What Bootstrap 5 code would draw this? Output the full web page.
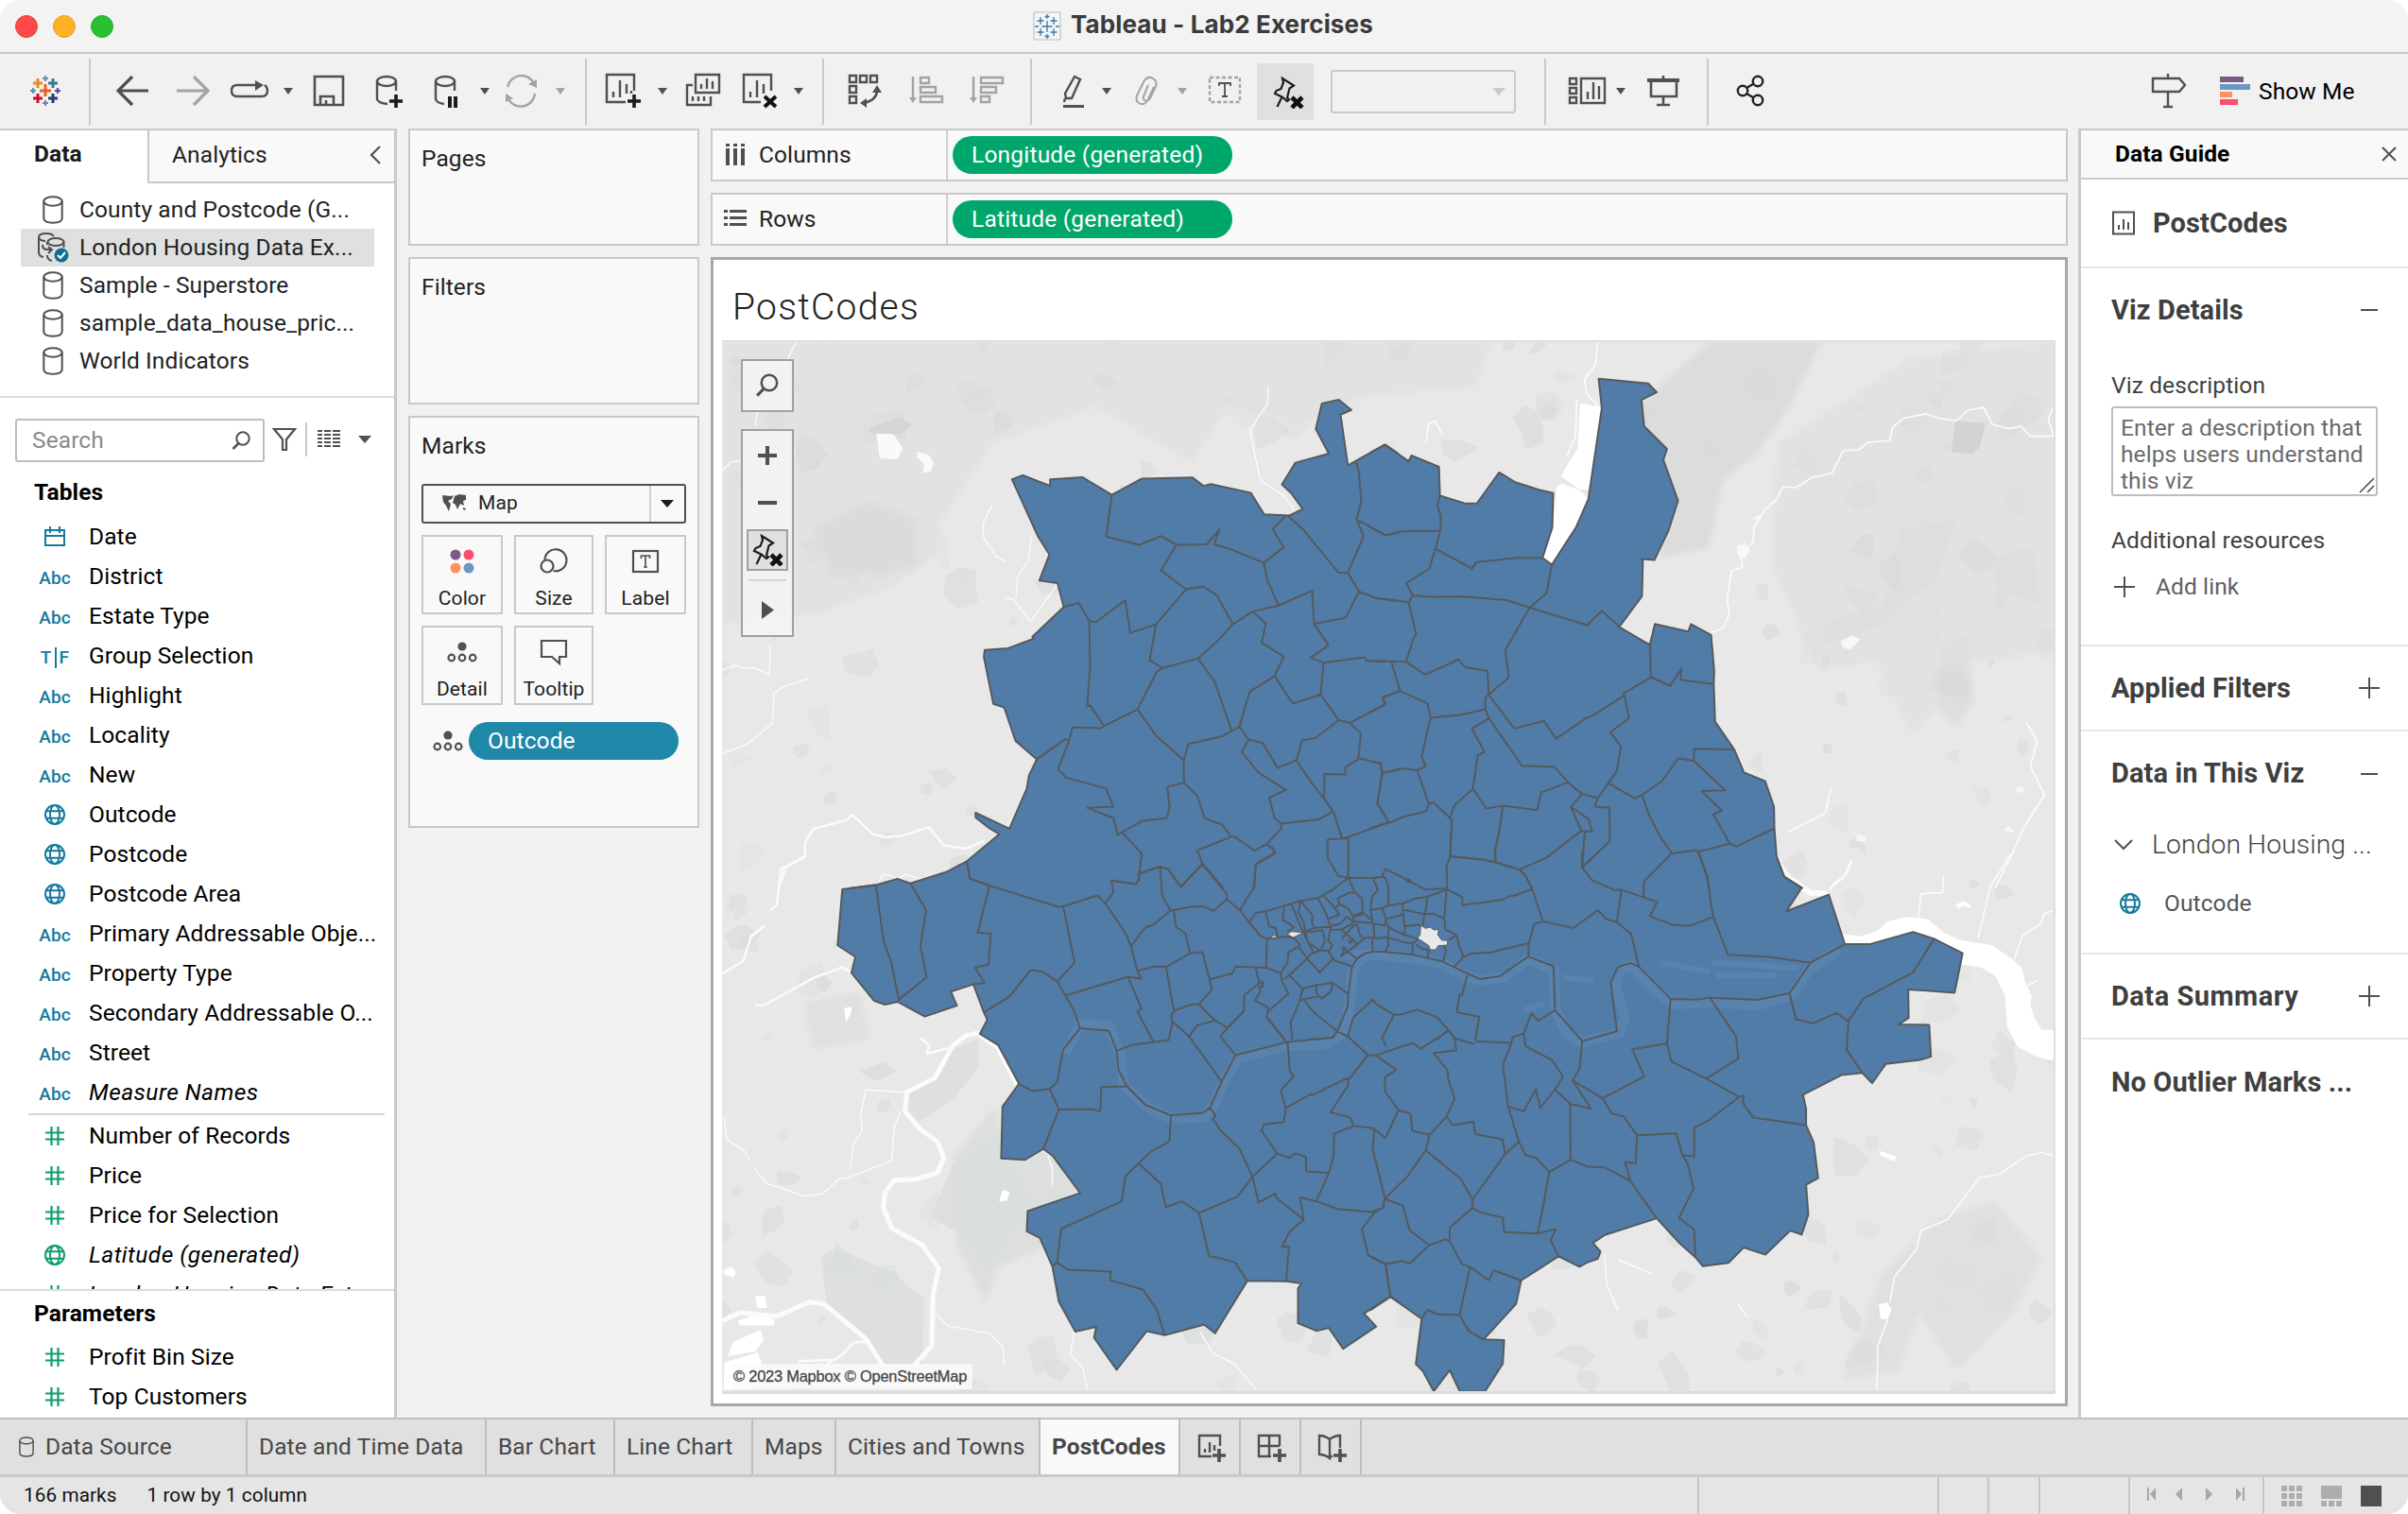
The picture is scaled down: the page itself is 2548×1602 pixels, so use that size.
<!DOCTYPE html>
<html lang="en">
<head>
<meta charset="utf-8">
<title>Tableau - Lab2 Exercises</title>
<link rel="stylesheet" href="https://cdn.jsdelivr.net/npm/bootstrap@5.3.0/dist/css/bootstrap.min.css">
<style>
html,body{height:100%}
body{font-family:Roboto,"Liberation Sans",sans-serif;font-size:24.5px;line-height:1.2;color:#222;background:#fff;overflow:hidden;letter-spacing:.1px}
svg{display:block;flex-shrink:0}
.win{width:2548px;height:1602px;background:#f1f1f1;border-radius:22px;overflow:hidden}
.titlebar{height:57px;background:#f3f3f3;border-bottom:2px solid #c8c8c8;font-family:Inter,sans-serif;font-weight:700;font-size:26px;color:#3a3a3a;letter-spacing:.12px}
.title-side{width:1093px}
.tools{height:79px}
.vsep{width:2px;height:70px;background:#c9c9c9;flex-shrink:0}
.ic{fill:none;stroke:#505050;stroke-width:2.4}
.dim{stroke:#a3a3a3}
.fd{fill:#505050;stroke:none}.fl{fill:#a3a3a3;stroke:none}.fk{fill:#1c1c1c;stroke:none}
.pinned{background:#e0e0e0}
.combo{width:196px;height:46px;border:2px solid #c9c9c9;border-radius:3px;margin-left:18px;margin-right:22px}
.main-area{height:1364px}
.side{width:420px;background:#fff;border-right:3px solid #c9c9c9;border-top:2px solid #c9c9c9}
.tab-data{width:156px;height:56px;font-weight:700;padding-left:36px;padding-top:10px;color:#1a1a1a}
.tab-an{height:56px;background:#f9f9f9;border-left:2px solid #c9c9c9;border-bottom:2px solid #c9c9c9;padding:0 13px 2px 24px}
.src{height:40px;margin:0 21px 0 22px;padding-left:17px;gap:10px}
.src.on{background:#e0e0e0}
.searchbox{width:264px;height:46px;border:2px solid #bdbdbd;border-radius:3px;color:#8a8a8a;padding:0 12px 0 16px}
.hd{font-weight:700;color:#000;padding-left:36px}
.fld{height:42px;color:#000;padding-left:36px;gap:14px;white-space:nowrap}
.fi{width:44px;height:24px;display:flex;align-items:center;justify-content:center;color:#147a9e;font-size:19px;font-weight:500}
.fi.txt{padding-top:4px}
.ital{font-style:italic;letter-spacing:.45px}
.cards{width:308px;gap:12px}
.pane{background:#f9f9f9;border:2px solid #c9c9c9;padding:15px 12px}
.mk{height:84px;border:2px solid #c9c9c9;font-size:21px;padding-top:1px}
.mk svg{margin:7px auto 7px}
.mksel{height:42px;border:2px solid #505050;border-radius:3px;font-size:21px}
.pill{height:40px;border-radius:20px;color:#fff;padding-left:20px}
.green{background:#00a76b;width:296px;letter-spacing:.2px}
.shelf{height:56px;background:#f9f9f9;border:2px solid #c9c9c9}
.shelf-name{width:249px;border-right:2px solid #d0d0d0;padding-left:12px;gap:13px}
.viz{border:3px solid #a8a8a8;background:#fff;width:1436px;height:1216px;padding:0 10px 0 9px}
.viz-title{height:85px;font-weight:300;font-size:39px;letter-spacing:1.25px;color:#222;padding:15px 0 0 11px}
.guide{width:349px;margin-left:11px;background:#fff;border-left:3px solid #c9c9c9;border-top:2px solid #c9c9c9;color:#3f3f3f}
.g-hd{height:52px;background:#f9f9f9;border-bottom:2px solid #c9c9c9;color:#000;font-weight:700;padding:0 12px 1px 36px}
.g-sec{border-bottom:2px solid #e6e6e6;padding-left:32px;padding-right:29px}
.g-t{font-weight:700;font-size:29px;white-space:nowrap}
.g-area{width:282px;height:95px;border:2px solid #bdbdbd;border-radius:3px;line-height:28px;color:#6b6b6b;padding:7px 8px}
.sheets{height:60px;background:#e0e0e0;border-top:2px solid #c0c0c0;color:#464646;white-space:nowrap}
.sh{height:58px;border-right:2px solid #bdbdbd;padding-left:12px}
.sh.cur{background:#f9f9f9;font-weight:700}
.status{height:42px;background:#e5e5e5;border-top:3px solid #c9c9c9;color:#111;font-size:20.7px}
.st{height:39px;border-right:2px solid #c6c6c6}
.w1{width:262px;padding-left:18px}.w2{width:253px}.w3{width:136px}.w4{width:146px}.w5{width:88px}.w6{width:216px}.w7{width:148px}.w8{width:64px}
.blk{fill:#517ca8;stroke:none}
.ln{fill:none;stroke:#555a5e;stroke-width:2;stroke-linejoin:round;vector-effect:non-scaling-stroke}
.riv{fill:none;stroke:#fbfbfb;vector-effect:non-scaling-stroke;stroke-linejoin:round}
.th{fill:none;stroke:#5983af;stroke-width:11;vector-effect:non-scaling-stroke;stroke-linejoin:round}
.attr{left:11px;bottom:5px;height:27px;width:254px;background:rgba(250,250,250,.85);font-family:"Liberation Sans",sans-serif;font-size:16.4px;letter-spacing:-.2px;color:#444;padding:4px 0 0 1px;white-space:nowrap;-webkit-text-stroke:.3px #4c4c4c}
.mctl{background:rgba(244,244,244,.9);border:2px solid #a0a0a0;width:56px}
</style>
</head>
<body>
<svg width="0" height="0" class="position-absolute">
<symbol id="cyl" viewBox="0 0 22 30"><path d="M1.3 6v18c0 3 4 4.7 9.7 4.7S20.700 27 20.700 24V6" fill="none" stroke="#505050" stroke-width="2"/><ellipse cx="11" cy="6" rx="9.700" ry="4.700" fill="none" stroke="#505050" stroke-width="2"/></symbol>
<symbol id="globe" viewBox="0 0 24 24"><g fill="none" stroke="currentColor" stroke-width="2"><circle cx="12" cy="12" r="10"/><ellipse cx="12" cy="12" rx="5" ry="10"/><path d="M2.500 8.300h19M2.500 15.700h19"/></g></symbol>
<symbol id="hash" viewBox="0 0 24 24"><path d="M8.500 2v20M15.500 2v20M2 8.500h20M2 15.500h20" stroke="#0d9d6b" stroke-width="2.200"/></symbol>
<symbol id="det" viewBox="0 0 32 22"><circle cx="16" cy="5" r="4.600" fill="#505050"/><g fill="none" stroke="#505050" stroke-width="2.200"><circle cx="4.800" cy="17" r="3.300"/><circle cx="16" cy="17" r="3.300"/><circle cx="27.200" cy="17" r="3.300"/></g></symbol>
<symbol id="pin" viewBox="0 0 34 34"><path d="M11 2L23 9.500L18.500 12.500L16 22.500L18 24.500L16 26L10.500 21.500L3 18L4.500 15L9.500 13L12 6.500ZM10.500 21.500L5.500 32" fill="none" stroke="#1c1c1c" stroke-width="2.200"/><path d="M21 22l11 11M32 22l-11 11" stroke="#111" stroke-width="4.600"/></symbol>
<symbol id="mag" viewBox="0 0 22 22"><circle cx="13" cy="9" r="6.700" fill="none" stroke="#505050" stroke-width="2"/><path d="M8.500 14L2.500 20" stroke="#505050" stroke-width="2.500"/></symbol>
<symbol id="pls" viewBox="0 0 24 24"><path d="M12 1v22M1 12h22" stroke="#505050" stroke-width="2"/></symbol>
</svg>
<div class="win d-flex flex-column">
<header class="titlebar d-flex align-items-center">
 <div class="title-side"><svg width="140" height="56" viewBox="0 0 140 56"><circle cx="28" cy="28" r="11.500" fill="#ff4947" stroke="#e0433f"/><circle cx="68" cy="28" r="11.500" fill="#ffb125" stroke="#e0a12c"/><circle cx="108" cy="28" r="11.500" fill="#28c132" stroke="#24ad2c"/></svg></div>
 <svg width="32" height="32" viewBox="0 0 32 32"><path d="M1 1h28v29H1z" fill="#f4f5f6" stroke="#bbb"/><path d="M15 10v12M9.500 16h11M8 6v8M4.500 10h7M22 6v8M18.500 10h7M8 18v8M4.500 22h7M22 18v8M18.500 22h7M15 3v5M12.500 5.500h5M15 24v5M12.500 26.500h5M2 16h4M24 16h4" stroke="#3777a8" stroke-width="1.300"/></svg>
 <span class="ps-2 pb-1">Tableau - Lab2 Exercises</span>
</header>
<div class="tools d-flex align-items-center">
 <svg width="94" height="78" viewBox="0 58 94 78" fill="none"><g stroke-width="3"><path d="M48 89v13M42 96h12" stroke="#eb5e1f"/><path d="M40 83v10M35 88h10" stroke="#ee8a1d"/><path d="M56 83v10M51 88h10" stroke="#3e7a8f"/><path d="M40 99v10M35 104h10" stroke="#c8102e"/><path d="M56 99v10M51 104h10" stroke="#1f3f77"/></g><g stroke-width="2.200"><path d="M48 80v6M45 83h6M35 93v6M32 96h6" stroke="#6394a6"/><path d="M61 93v6M58 96h6" stroke="#51538d"/><path d="M48 106v6M45 109h6" stroke="#7285b0"/></g></svg>
 <div class="vsep"></div>
 <svg class="ic" width="142" height="78" viewBox="96 58 142 78"><path d="M157 96H126M140 81l-15 15 15 15" stroke-width="3.200"/><path class="dim" d="M187 96h31M205 81l15 15-15 15" stroke-width="3.200"/></svg>
 <svg class="ic" width="142" height="78" viewBox="238 58 142 78"><path d="M273 90h-22q-6 0-6 6v0q0 6 6 6h26q6 0 6-6 0-4-3-6"/><path class="fd" d="M270 85l9 5-9 6zM300 93h10l-5 7z"/><path d="M333 81h30v30h-30zM339 111v-9h14v9M345 106v5" stroke-width="2.600"/></svg>
 <svg class="ic" width="239" height="78" viewBox="380 58 239 78"><ellipse cx="409" cy="86" rx="10" ry="5"/><path d="M399 86v19q1 4 11 5M419 86v10"/><path d="M412 107h14M419 100v14" stroke="#1c1c1c" stroke-width="3.600"/><ellipse cx="471" cy="86" rx="10" ry="5"/><path d="M461 86v19q1 4 9 5M481 86v10"/><path class="fk" d="M474 102h4v12h-4zM480 102h4v12h-4z"/><path class="fd" d="M508 93h10l-5 7z"/><g class="ic dim"><path d="M537 92a15 15 0 0 1 28-4M566 99a15 15 0 0 1-28 6"/></g><path class="fl" d="M568 84v9l-9-4zM535 108v-9l8 5zM588 93h10l-5 7z"/></svg>
 <div class="vsep"></div>
 <svg class="ic" width="249" height="78" viewBox="621 58 249 78"><path d="M671 96V79h-29v29h20M649 97v6M656 85v18M663 89v10M668 96v3"/><path d="M664 107h14M671 100v14" stroke="#1c1c1c" stroke-width="3.600"/><path class="fd" d="M696 93h10l-5 7z"/><path d="M736 79h25v19h-25zM742 89v5M748 83v11M754 86v8M733 90h-6v21h25v-9M733 102v5M739 102v5M745 102v5"/><path d="M816 96V79h-29v29h18M794 97v6M801 85v18M808 89v10"/><path d="M809 102l12 11M821 102l-12 11" stroke="#111" stroke-width="4"/><path class="fd" d="M840 93h10l-5 7z"/></svg>
 <div class="vsep"></div>
 <svg class="ic" width="218" height="78" viewBox="872 58 218 78"><path d="M899 80h7v7h-7zM910 80h7v7h-7zM921 80h7v7h-7zM899 91h7v7h-7zM899 102h7v7h-7zM914 109q13-3 14-12"/><path class="fd" d="M928 90l5 8h-10zM910 109l7-5v10z"/><g class="dim"><path d="M966 81v23M974 82h9v6h-9zM974 92h16v6h-16zM974 102h23v6h-23zM1030 81v23M1038 82h23v6h-23zM1038 92h16v6h-16zM1038 102h9v6h-9z"/></g><path class="fl" d="M962 103h8l-4 6zM1026 103h8l-4 6z"/></svg>
 <div class="vsep"></div>
 <svg class="ic" width="238" height="78" viewBox="1092 58 238 78"><path d="M1137 81l6 3-9 20-6 0-1-5zM1127 104l-1 4"/><path class="fd" d="M1125 111h22v3h-22zM1166 93h10l-5 7z"/><path class="dim" d="M1221 92l-7 15q-4 5-9 2-4-3-2-8l8-16q4-5 9-2 5 3 3 8l-6 13q-3 4-6 2-2-2-1-4l5-12" stroke-width="2"/><path class="fl" d="M1246 93h10l-5 7z"/><path class="dim" d="M1280 82h32v26h-32z" stroke-dasharray="4 2.500"/><path d="M1290 91v-3h12v3M1296 88v14M1293 102h6" stroke-width="1.800"/></svg>
 <div class="pinned p-2"><svg width="44" height="44" viewBox="0 0 44 44"><use href="#pin" x="8" y="6" width="34" height="34"/></svg></div>
 <div class="combo d-flex align-items-center justify-content-end pe-2"><svg width="15" height="10"><path d="M0 1h14l-7 8z" fill="#c9c9c9"/></svg></div>
 <div class="vsep ms-2"></div>
 <svg class="ic" width="170" height="78" viewBox="1636 58 170 78"><path d="M1661 83h7v6h-7zM1661 93h7v6h-7zM1661 103h7v6h-7zM1673 83h25v26h-25zM1680 97v8M1686 87v18M1692 91v14"/><path class="fd" d="M1710 93h10l-5 7zM1743 83h34v4h-34z"/><path d="M1747 86v16h27V86M1760 80v3M1760 102v9M1753 111h14" stroke-width="2.600"/></svg>
 <div class="vsep"></div>
 <svg class="ic" width="480" height="78" viewBox="1808 58 480 78"><g stroke="#222"><circle cx="1844" cy="96" r="5.200"/><circle cx="1860" cy="86" r="5.200"/><circle cx="1860" cy="106" r="5.200"/><path d="M1848 93l7-4M1848 99l7 4"/></g></svg>
 <svg class="ic" width="102" height="78" viewBox="2287 58 102 78" overflow="visible"><path d="M2277 83h28l6 7-6 7h-28zM2293 78v5M2293 97v16M2288 113h10"/><path d="M2348 81h25v6h-25z" fill="#7b5b8c" stroke="none"/><path d="M2348 89h32v6h-32z" fill="#6a97c4" stroke="none"/><path d="M2348 97h13v6h-13z" fill="#ff9060" stroke="none"/><path d="M2348 105h19v6h-19z" fill="#ff4d6c" stroke="none"/></svg>
 <span class="text-black">Show Me</span>
</div>
<div class="main-area d-flex">
 <aside class="side d-flex flex-column">
  <div class="d-flex"><div class="tab-data">Data</div><div class="tab-an flex-fill d-flex justify-content-between align-items-center"><span>Analytics</span><svg width="14" height="22"><path d="M12 2L3 11l9 9" fill="none" stroke="#505050" stroke-width="2.200"/></svg></div></div>
  <div style="height:8px"></div>
  <div class="src d-flex align-items-center"><svg width="35" height="30"><use href="#cyl" x="6" width="22" height="30"/></svg>County and Postcode (G...</div>
  <div class="src on d-flex align-items-center"><svg width="35" height="34" viewBox="0 0 35 34"><g fill="none" stroke="#505050" stroke-width="2"><path d="M18 5q-2-3-8-3-8 0-8 4v16q0 4 5 5M2 6q1 4 7 4"/><ellipse cx="20" cy="11" rx="8.500" ry="4"/><path d="M11 11v3M28.500 11v6M6 14q0 5 5 5h4M12 16l4 3-4 4M11 25q0 5 5 6"/></g><circle cx="26" cy="25" r="7.500" fill="#0e6f93"/><path d="M22 25l3 3 5-6" fill="none" stroke="#fff" stroke-width="2"/></svg>London Housing Data Ex...</div>
  <div class="src d-flex align-items-center"><svg width="35" height="30"><use href="#cyl" x="6" width="22" height="30"/></svg>Sample - Superstore</div>
  <div class="src d-flex align-items-center"><svg width="35" height="30"><use href="#cyl" x="6" width="22" height="30"/></svg>sample_data_house_pric...</div>
  <div class="src d-flex align-items-center"><svg width="35" height="30"><use href="#cyl" x="6" width="22" height="30"/></svg>World Indicators</div>
  <div style="height:17px"></div>
  <div style="height:2px;background:#dcdcdc"></div>
  <div class="d-flex align-items-center" style="padding:22px 0 0 16px">
   <div class="searchbox d-flex justify-content-between align-items-center"><span>Search</span><svg width="22" height="22"><use href="#mag"/></svg></div>
   <svg width="120" height="46" viewBox="280 442 120 46"><path d="M290 453h22l-9 11v11h-4v-11z" fill="none" stroke="#505050" stroke-width="2.200"/><path d="M324 446v36" stroke="#c9c9c9" stroke-width="2"/><path d="M336 455h5M343 455h7M352 455h8M336 459h5M343 459h7M352 459h8M336 463h5M343 463h7M352 463h8M336 467h5M343 467h7M352 467h8M336 471h5M343 471h7M352 471h8" stroke="#505050" stroke-width="2"/><path d="M379 460h14l-7 8z" fill="#505050"/></svg>
  </div>
  <div class="hd" style="padding-top:17px;height:58px">Tables</div>
  <div id="dims"></div>
  <div style="height:2px;margin:1px 10px 1px 30px;background:#d6d6d6"></div>
  <div id="meas" class="overflow-hidden" style="height:183px"></div>
  <div style="height:2px;background:#dcdcdc"></div>
  <div class="hd" style="padding-top:9px;height:49px">Parameters</div>
  <div id="pars"></div>
 </aside>
 <div class="cards d-flex flex-column" style="margin-left:12px">
  <div class="pane" style="height:124px">Pages</div>
  <div class="pane" style="height:156px">Filters</div>
  <div class="pane" style="height:436px">
   <div style="height:55px">Marks</div>
   <div class="mksel d-flex align-items-center"><svg width="52" height="24" viewBox="0 0 52 24" style="margin-right:6px"><path d="M20 3l9 1 3-1-2 4-4 2 3 3-2 8-3-6-3-4zM33 4l5-2 7 1v5l-3 1 1 5-4-2-3 6-2-5-3-2zM42 16l3 1-1 2-2-1z" fill="#505050"/></svg><span class="flex-fill">Map</span><svg width="37" height="38"><path d="M1 0v38" stroke="#d0d0d0" stroke-width="2"/><path d="M12 15h14l-7 8z" fill="#1c1c1c"/></svg></div>
   <div class="d-flex flex-wrap" style="gap:12px;margin-top:12px">
    <div class="mk text-center" style="width:86px"><svg width="40" height="38" viewBox="0 0 40 38"><circle cx="13" cy="11" r="5.500" fill="#7b5b8c"/><circle cx="27" cy="11" r="5.500" fill="#ff4d6c"/><circle cx="13" cy="25" r="5.500" fill="#ff9060"/><circle cx="27" cy="25" r="5.500" fill="#6a97c4"/></svg>Color</div>
    <div class="mk text-center" style="width:84px"><svg width="40" height="38" viewBox="0 0 40 38"><g fill="none" stroke="#505050" stroke-width="2.200"><path d="M10.500 16a11.500 11.500 0 1 1 9 12"/><circle cx="13" cy="23" r="6.500"/></g></svg>Size</div>
    <div class="mk text-center" style="width:86px"><svg width="40" height="38" viewBox="0 0 40 38"><g fill="none" stroke="#505050" stroke-width="2.200"><rect x="7" y="7" width="26" height="22"/><path d="M15.500 15v-3h9v3M20 12v12M18 24h4" stroke-width="1.700"/></g></svg>Label</div>
    <div class="mk text-center" style="width:86px"><svg width="40" height="38"><use href="#det" x="4" y="7" width="32" height="22"/></svg>Detail</div>
    <div class="mk text-center" style="width:84px"><svg width="40" height="38" viewBox="0 0 40 38"><path d="M7 6h26v17h-7v7l-8-7H7z" fill="none" stroke="#505050" stroke-width="2.200"/></svg>Tooltip</div>
   </div>
   <div class="d-flex align-items-center" style="margin-top:18px;padding-left:12px"><svg width="38" height="22"><use href="#det" width="32" height="22"/></svg><div class="pill d-flex align-items-center" style="background:#1f87a8;width:222px">Outcode</div></div>
  </div>
 </div>
 <div class="d-flex flex-column" style="margin-left:12px;gap:12px;width:1436px">
  <div class="shelf d-flex align-items-center"><div class="shelf-name d-flex align-items-center h-100"><svg width="24" height="26"><path d="M2 1h4v3H2zM10 1h4v3h-4zM18 1h4v3h-4zM2 6h4v18H2zM10 6h4v18h-4zM18 6h4v18h-4z" fill="#505050"/></svg>Columns</div><div class="pill green d-flex align-items-center" style="margin-left:5px">Longitude (generated)</div></div>
  <div class="shelf d-flex align-items-center"><div class="shelf-name d-flex align-items-center h-100"><svg width="24" height="26"><path d="M0 3h4v3H0zM0 10h4v3H0zM0 17h4v3H0zM6 3h18v3H6zM6 10h18v3H6zM6 17h18v3H6z" fill="#505050"/></svg>Rows</div><div class="pill green d-flex align-items-center" style="margin-left:5px">Latitude (generated)</div></div>
  <div class="viz">
   <div class="viz-title d-flex align-items-center">PostCodes</div>
   <div class="position-relative" style="width:1411px;height:1115px">
   <svg id="map" width="1411" height="1115" viewBox="764 360 1411 1115">
    <defs>
     <filter id="soft"><feGaussianBlur stdDeviation="3"/></filter>
    </defs>
    <rect x="764" y="360" width="1411" height="1115" fill="#e8e8e8"/>
    <g filter="url(#soft)" fill="#dedede">
     <path d="M1810 360h118l-40 80-30 40-35 30-15 70-50 10-5-60-20-100z" fill="#dcdcdc"/>
     <path d="M880 360h700l-20 50-120 10-60 30-80-20-40 60-100-60-110 40-60 90-80-10-60-90z" fill="#e2e2e2"/>
     <path d="M764 360h110l60 60 40 100 30 60-60 40-80 30-100 10z" fill="#e2e2e2"/>
     <path d="M860 560l60-30 50 20v50l-90 10z" fill="#dbdbdb"/>
     <path d="M1880 470l140-90 155-20v330l-90 10-60 80-40-80-60 10-50-110z" fill="#e2e2e2"/>
     <path d="M2010 560l60-10-20 60-60 50zM2110 590l40-10 10 60-50-20zM2055 690l25-20 10 70-20 30-20-20z"/>
     <path d="M1930 660l80-24-10 20-70 26z"/>
     <path d="M1008 1225l45-55 14 60 30 40 30-10-20 60-50 20-14 40-30-60z" fill="#dddfde"/>
     <path d="M2050 1290l60-20 50 60-30 60-60 60-40-60-20 60-60 10 40-110z" fill="#e0e0e0"/>
     <path d="M850 1060l60-10 10 50-60 10z" fill="#e0e0e0"/>
    </g>
    <g id="patches"></g>
    <g transform="translate(760 900) scale(.45918 .38265)">
     <path d="M655,780 790,860 834,947 713,997 620,1160 580,1080 490,1010 540,870ZM440,668 500,628 540,550 600,520 600,600 540,690 460,750 440,720ZM237,1120 270,1100 400,1165 475,1240 470,1425 380,1420 340,1340 250,1255Z" fill="#dadddb" opacity=".8"/>
     <path d="M655,938 672,944 665,968 647,970ZM290,436 308,432 306,450 294,475ZM12,1160 30,1150 41,1165 36,1180 15,1174ZM85,1232 108,1232 112,1265 90,1265ZM45,1300 80,1284 130,1296 128,1313 50,1313ZM22,1398 35,1358 98,1325 105,1355 85,1385ZM15,1415 92,1388 102,1425 80,1490 12,1490Z" fill="#fff"/>
     <path class="riv" stroke-width="5" d="M603,503 570,512 540,540 500,628 435,668 430,720 465,770 505,805 520,850 505,890 460,908 405,912 385,945 380,985 400,1045 470,1090 508,1155 495,1230 492,1370 450,1425M10,1300 50,1278 135,1288 210,1248 245,1255 340,1350 380,1425"/>
     <path class="riv" stroke-width="7" d="M603,507 645,542 690,645"/>
     <path class="riv" stroke-width="2.500" d="M85,427 105,428 220,352 285,323 305,335M465,517 486,540 480,562 535,545M10,340 58,305 76,237 107,208M120,165 135,150 145,50 155,45 200,15 200,0M250,1420 285,1395 312,1360 340,1358M185,1412 270,1408"/>
     <path class="riv" stroke-width="1.400" d="M430,668 340,662 328,732 332,775 312,810 303,880M420,720 405,770 400,857 300,905 278,908 240,950 195,955 150,935 110,920 85,880M14,740 20,800 60,830 72,857M500,1280 530,1315 625,1335 655,1370 660,1425M820,1330 812,1395 840,1430 850,1490M1110,1330 1140,1390 1190,1420 1240,1490M760,845 770,880 770,925M370,85 380,65 400,70 415,80 430,65 470,80"/>
    </g>
    <g transform="translate(760 340) scale(.45918 .38265)">
     <path d="M364,310 395,308 408,318 425,352 412,382 372,378ZM458,360 485,370 497,390 490,415 472,420 475,395 458,375Z" fill="#fafafa"/>
     <path d="M348,296 420,264 447,286 420,312 350,310Z" fill="#d5d5d5"/>
     <path class="riv" stroke-width="2.500" d="M145,1550 155,1510 200,1480 200,1440 220,1403 295,1380 310,1365 355,1417 385,1427 425,1422 485,1399 520,1449 570,1458 612,1437"/>
     <path class="riv" stroke-width="1.400" d="M180,55 150,130 90,250 85,290M10,412 30,388 55,385M10,965 40,950 60,960 85,958 118,978 120,895M207,988 155,1008 128,1028 126,1110 66,1170 10,1195M630,510 610,560 612,600 640,650 660,663M722,590 715,660 690,705 686,765M660,765 680,768 720,830 780,730M1268,180 1265,230 1225,300 1242,400 1250,440 1300,480 1330,525"/>
    </g>
    <g transform="translate(1450 340) scale(.47194 .38265)">
     <path d="M470,227 512,235 519,240 489,465 470,466 427,428 465,350ZM418,455 430,448 470,468 489,490 461,570 407,668 388,655 410,565Z" fill="#fff"/>
     <path d="M1312,275 1379,282 1366,348 1348,368 1303,362Z" fill="#d3d3d3"/>
     <path d="M1055,885 1080,868 1098,880 1075,908 1060,902ZM856,545 882,530 870,555ZM822,620 840,614 852,635 838,656 824,645ZM1090,1420 1110,1422 1112,1440 1090,1436ZM1422,1405 1432,1394 1444,1412 1424,1410ZM1448,1290 1462,1285 1466,1300 1450,1305Z" fill="#f6f7f6"/>
     <path class="riv" stroke-width="1.700" d="M765,860 790,850 805,810 800,770 810,690 835,680 830,650 858,610 860,570 885,520 910,495 925,458 955,460 990,432 1035,420 1060,358 1095,355 1115,335 1165,330 1170,295 1195,268 1245,256 1275,268 1315,275 1340,245 1375,238 1395,285 1430,297 1460,290 1480,318 1532,318 1520,270 1530,240M510,55 505,120 480,160 485,200 512,235M463,215 460,320 440,375M125,335 130,285 145,275 160,310M935,1413 1020,1360 1033,1290M1470,1107 1495,1160 1480,1230 1512,1310 1465,1400 1440,1470 1400,1568M1078,1490 1060,1540 1030,1568"/>
    </g>
    <g transform="translate(1450 900) scale(.47194 .38265)">
     <path d="M1050,230 1100,237 1137,222 1160,196 1207,183 1250,190 1285,226 1320,247 1395,262 1436,297 1460,323 1470,370 1483,402 1480,425 1488,460 1505,496 1532,496 1532,579 1518,579 1485,565 1452,543 1428,490 1423,400 1400,345 1367,322 1328,315 1200,300 1064,265Z" fill="#fff"/>
     <path d="M905,0 925,40 943,70 990,110 1020,110 1032,125 985,125 925,80Z" fill="#fbfbfb"/>
     <path d="M1312,150 1328,140 1342,146 1348,160 1330,152 1318,162ZM1140,1255 1160,1250 1168,1270 1160,1296 1144,1295ZM1140,830 1178,845 1176,860 1145,845Z" fill="#fff"/>
     <path class="riv" stroke-width="1.600" d="M1030,112 1040,90 1068,65 1080,28M1228,185 1235,120 1283,116 1285,70M1532,165 1510,175 1505,200 1462,235 1444,300M1470,375 1495,360M1435,10 1390,100 1362,245M1532,843 1505,835 1470,845 1410,895 1365,905 1295,1020 1235,1050 1225,1100 1175,1180 1165,1250M1160,1296 1138,1370 1136,1490M525,1115 530,1200 555,1270M555,1130 630,1170M825,1255 845,1290"/>
    </g>
    <g id="districts"></g>
    <rect x="764" y="1472" width="1411" height="3" fill="#dcdcdc"/><rect x="764" y="360" width="1411" height="2" fill="#dedede"/><rect x="2173" y="360" width="2" height="1115" fill="#dedede"/>
   </svg>
   <div class="mctl position-absolute" style="left:20px;top:20px;height:56px"><svg width="52" height="52"><use href="#mag" x="12" y="12" width="27" height="27"/></svg></div>
   <div class="mctl position-absolute" style="left:20px;top:94px;height:220px"><svg width="52" height="216" viewBox="0 0 52 216"><path d="M16 26h20M26 16v20M16 76h20" stroke="#505050" stroke-width="4"/><rect x="5" y="105" width="42" height="42" fill="#e0e0e0" stroke="#a0a0a0" stroke-width="2"/><use href="#pin" x="9" y="109" width="34" height="34"/><path d="M6 158h40" stroke="#d4d4d4" stroke-width="2"/><path d="M20 180v19l13-9.500z" fill="#505050"/></svg></div>
   <div class="attr position-absolute">© 2023 Mapbox © OpenStreetMap</div>
   </div>
  </div>
 </div>
 <aside class="guide">
  <div class="g-hd d-flex justify-content-between align-items-center"><span>Data Guide</span><svg width="16" height="16"><path d="M1 1l14 14M15 1L1 15" stroke="#505050" stroke-width="2"/></svg></div>
  <div class="g-sec d-flex align-items-center" style="height:94px"><svg width="26" height="26" viewBox="0 0 26 26"><path d="M2 1.500h22v23H2zM8 15v5M13 9v11M18 12v8" fill="none" stroke="#505050" stroke-width="2"/></svg><span class="g-t" style="margin-left:18px">PostCodes</span></div>
  <div class="g-sec" style="height:400px">
   <div class="d-flex align-items-center justify-content-between" style="height:88px"><span class="g-t">Viz Details</span><svg width="24" height="24"><path d="M3 12h18" stroke="#505050" stroke-width="2"/></svg></div>
   <div style="height:58px;padding-top:21px">Viz description</div>
   <div class="g-area position-relative">Enter a description that helps users understand this viz<svg class="position-absolute bottom-0 end-0" width="18" height="18"><path d="M1 16L16 1M9 16l7-7" stroke="#505050" stroke-width="1.600"/></svg></div>
   <div style="height:73px;padding-top:32px">Additional resources</div>
   <div class="d-flex align-items-center" style="height:46px;gap:21px;padding-left:2px;color:#606060"><svg width="24" height="24"><use href="#pls"/></svg>Add link</div>
  </div>
  <div class="g-sec d-flex align-items-center justify-content-between" style="height:90px"><span class="g-t">Applied Filters</span><svg width="24" height="24"><use href="#pls"/></svg></div>
  <div class="g-sec" style="height:236px">
   <div class="d-flex align-items-center justify-content-between" style="height:89px"><span class="g-t">Data in This Viz</span><svg width="24" height="24"><path d="M3 12h18" stroke="#505050" stroke-width="2"/></svg></div>
   <div class="d-flex align-items-center text-nowrap" style="height:62px;font-size:28.300px;font-weight:300;gap:20px;padding-left:3px"><svg width="20" height="14"><path d="M1 2l9 9 9-9" fill="none" stroke="#505050" stroke-width="2"/></svg>London Housing ...</div>
   <div class="d-flex align-items-center" style="height:61px;gap:24px;padding-left:8px;color:#555"><svg width="24" height="24" style="color:#147a9e"><use href="#globe"/></svg>Outcode</div>
  </div>
  <div class="g-sec d-flex align-items-center justify-content-between" style="height:90px"><span class="g-t" style="letter-spacing:.5px">Data Summary</span><svg width="24" height="24"><use href="#pls"/></svg></div>
  <div class="d-flex align-items-center" style="height:90px;padding-left:32px"><span class="g-t">No Outlier Marks ...</span></div>
 </aside>
</div>
<nav class="sheets d-flex">
 <div class="sh w1 d-flex align-items-center"><svg width="18" height="22" class="me-2" style="margin-left:1px"><use href="#cyl" width="18" height="22"/></svg><span style="margin-left:3px">Data Source</span></div>
 <div class="sh w2 d-flex align-items-center">Date and Time Data</div>
 <div class="sh w3 d-flex align-items-center">Bar Chart</div>
 <div class="sh w4 d-flex align-items-center">Line Chart</div>
 <div class="sh w5 d-flex align-items-center">Maps</div>
 <div class="sh w6 d-flex align-items-center">Cities and Towns</div>
 <div class="sh cur w7 d-flex align-items-center">PostCodes</div>
 <div class="sh w8 ps-0"><svg class="ic" width="62" height="58" viewBox="1249 1502 62 58"><path d="M1291 1530v-11h-22v22h13M1275 1533v4M1280 1526v11M1285 1529v6"/><path d="M1283 1540h14M1290 1533v14" stroke-width="3.600"/></svg></div>
 <div class="sh w8 ps-0"><svg class="ic" width="62" height="58" viewBox="1313 1502 62 58"><path d="M1354 1530v-11h-22v22h13M1343 1519v22M1332 1530h22"/><path d="M1347 1540h14M1354 1533v14" stroke-width="3.600"/></svg></div>
 <div class="sh w8 ps-0"><svg class="ic" width="62" height="58" viewBox="1377 1502 62 58"><path d="M1418 1532v-13q-6 0-11 4-5-4-11-4v20q6 0 11 4v-20M1407 1541h3"/><path d="M1411 1540h14M1418 1533v14" stroke-width="3.600"/></svg></div>
</nav>
<footer class="status d-flex align-items-center">
 <div class="st d-flex align-items-center" style="width:1798px;padding-left:25px;gap:32px"><span>166 marks</span><span>1 row by 1 column</span></div>
 <div class="st" style="width:254px"></div><div class="st" style="width:53px"></div><div class="st" style="width:54px"></div><div class="st" style="width:95px"></div>
 <div class="st" style="width:142px"><svg width="140" height="38" viewBox="2256 1563 140 38"><path d="M2274 1574h2v14h-2zM2283 1574v14l-6-7zM2311 1574v14l-7-7zM2336 1574v14l7-7zM2368 1574v14l6-7zM2375 1574h2v14h-2z" fill="#a8a8a8"/></svg></div>
 <svg width="140" height="38" viewBox="2396 1563 140 38"><path d="M2414 1571h6v6h-6zM2422 1571h6v6h-6zM2430 1571h6v6h-6zM2414 1579h6v6h-6zM2422 1579h6v6h-6zM2430 1579h6v6h-6zM2414 1587h6v6h-6zM2422 1587h6v6h-6zM2430 1587h6v6h-6zM2456 1571h22v14h-22zM2456 1587h6v6h-6zM2464 1587h6v6h-6zM2472 1587h6v6h-6z" fill="#adadad"/><rect x="2498" y="1571" width="22" height="22" fill="#505050"/></svg>
</footer>
</div>
<script>
// Field lists of the data pane: [icon, label, italic]
const G='<svg width="24" height="24"><use href="#globe"/></svg>',H='<svg width="24" height="24"><use href="#hash"/></svg>',
TF='T<svg width="8" height="24"><path d="M4 1v22" stroke="#147a9e" stroke-width="2"/></svg>F',
CAL='<svg width="24" height="24" viewBox="0 0 24 24"><path d="M2 5h20v16H2zM2 11h20M7 1v7M17 1v7" fill="none" stroke="#147a9e" stroke-width="2"/></svg>';
const fill=(id,a)=>document.getElementById(id).innerHTML=a.map(([i,t,s])=>`<div class="fld d-flex align-items-center"><span class="fi ${i=='Abc'||i==TF?'txt':''}">${i}</span><span class="${s?'ital':''}">${t}</span></div>`).join('');
fill('dims',[[CAL,'Date'],['Abc','District'],['Abc','Estate Type'],[TF,'Group Selection'],['Abc','Highlight'],['Abc','Locality'],['Abc','New'],[G,'Outcode'],[G,'Postcode'],[G,'Postcode Area'],['Abc','Primary Addressable Obje...'],['Abc','Property Type'],['Abc','Secondary Addressable O...'],['Abc','Street'],['Abc','Measure Names',1]]);
fill('meas',[[H,'Number of Records'],[H,'Price'],[H,'Price for Selection'],['<span style="color:#0d9d6b">'+G+'</span>','Latitude (generated)',1],[H,'London Housing Data Extr...',1]]);
fill('pars',[[H,'Profit Bin Size'],[H,'Top Customers']]);
// Land-use patches, from a fixed seed
let s=7;const r=()=>(s=(s*16807)%2147483647)/2147483647;let p='';
for(let i=0;i<360;i++){const x=764+r()*1411,y=360+r()*1115,a=5+r()*18,n=5+Math.floor(r()*3);let q=[];
 for(let k=0;k<n;k++){const t=k/n*6.283,d=a*(.4+r()*.8);q.push((x+d*Math.cos(t)).toFixed(0)+','+(y+d*Math.sin(t)).toFixed(0))}
 p+=`<polygon points="${q.join(' ')}" fill="${r()>.4?'#d9dddb':'#dadada'}" opacity="${(.25+r()*.5).toFixed(2)}"/>`}
document.getElementById('patches').innerHTML=p;
// Postcode districts, one tile per quarter of the map: origin, scale, land area, outline, inner borders
const T=[
{x:760,y:340,sx:1568/720,sy:1568/600,close:'1568,1568',
out:'301,1568 363,1559 413,1542 443,1554 525,1523 573,1493 648,1418 625,1402 593,1372 593,1359 671,1403 711,1292 716,1256 734,1211 685,1160 659,1068 634,1058 612,928 614,909 668,904 726,878 724,872 796,790 782,724 740,717 763,645 736,593 677,437 702,426 765,455 765,437 839,431 907,480 976,435 1093,432 1118,455 1135,450 1227,474 1258,534 1316,537 1347,519 1320,475 1299,451 1330,391 1407,366 1377,298 1391,227 1430,217 1459,245 1434,258 1451,398 1537,341 1568,367',
in:'907,480 894,595 970,618 1021,594 1056,618 1126,617 1155,575 1143,616 1178,629 1257,668 1303,625 1278,574 1307,539|1056,618 1020,689 1078,741 1117,733 1148,756 1186,837 1232,802 1291,786 1369,745 1373,836 1406,896 1365,930 1395,944 1489,929 1494,939 1568,941|1257,668 1266,717 1291,786|1312,537 1348,576 1429,695 1451,695 1487,595 1471,548 1482,497 1476,415 1470,390|1471,548 1539,592 1568,584|1451,695 1476,747 1446,820 1373,836|1476,747 1518,766 1568,773|1078,741 1009,838 949,862 938,771 870,832 855,829 831,779 796,790|855,829 857,950 850,1065 857,1062 889,1119 966,1073 1010,970 1024,959 994,937 1009,838|1024,959 1105,932 1150,885 1186,837|1105,932 1144,996 1183,1132|966,1073 1009,1146 1073,1214 1083,1169 1162,1147 1201,1121 1224,1025 1282,981 1303,927 1252,889 1262,836 1232,802|1282,981 1324,1057 1388,1032 1395,944|1388,1032 1430,1103 1457,1110 1537,1059 1530,1040 1568,1024|1430,1103 1375,1153 1346,1158 1332,1214 1289,1235 1255,1166 1222,1156 1201,1121|1222,1156 1206,1191 1245,1248 1308,1296 1270,1317 1282,1374 1297,1389 1384,1377 1414,1357|1332,1214 1368,1277 1396,1320 1418,1357 1437,1430 1452,1426 1545,1385 1519,1332 1530,1249 1527,1222 1475,1208 1481,1139 1463,1120 1457,1110|1396,1320 1397,1252 1445,1253 1445,1233 1475,1211|1530,1249 1568,1240|1073,1214 1073,1276 1035,1287 1040,1343 1034,1373 978,1381 930,1413 920,1420 911,1374 850,1345 910,1342 894,1292 802,1262 783,1239 809,1158 816,1123 882,1125 889,1119|809,1158 799,1156 734,1211|1073,1276 1104,1312 1121,1374 1161,1392 1181,1424 1191,1426 1236,1464 1263,1446 1297,1403 1297,1389|1263,1446 1275,1455 1283,1469 1239,1501 1235,1568|1181,1426 1104,1463 1116,1499 1066,1564 1037,1515 1018,1508 970,1527 976,1472 930,1413|1116,1499 1164,1568|970,1527 968,1546 961,1556 906,1546|573,1493 580,1541 625,1560'},
{x:1450,y:340,sx:1568/740,sy:1568/600,close:'0,1568',
out:'0,363 33,341 86,387 92,371 154,402 156,482 214,504 239,503 289,418 325,445 378,466 410,475 408,570 386,654 407,673 461,570 489,491 519,240 512,159 623,172 642,196 608,217 614,290 665,353 657,383 690,496 669,577 637,660 609,657 611,663 609,760 558,845 620,890 627,893 638,837 713,858 719,837 764,867 771,965 770,1003 773,1107 816,1184 838,1248 885,1271 905,1342 906,1402 911,1481 928,1536 970,1568',
in:'0,570 36,592 69,581 157,579 158,537 150,508 156,482|157,579 146,629 132,684 81,724 95,758 135,762 210,761 306,771 357,792 395,752 407,673|146,629 228,684 238,666 330,654 386,654|0,760 11,765 86,777 95,758|86,777 103,867 98,873 80,941 47,941 0,940|80,941 123,977 198,935 213,957 263,966 265,1032 310,985 303,908 357,792|357,792 486,840 519,800 558,845|627,893 629,984 568,1029 570,1035 580,1098 538,1136 562,1175 553,1243 510,1318 475,1307 443,1275 413,1232 340,1229 266,1098 258,1073 258,1040 265,1032 323,1126 389,1105 417,1154 484,1097 499,1090 568,1035|629,984 673,1008 697,960 696,991 770,1003|47,941 67,1022 27,1040 34,1059 0,1082|67,1022 128,1056 135,1096 204,1088 258,1073|135,1096 115,1203 124,1230 105,1241 70,1237 27,1249 16,1332 41,1385 0,1402|0,1217 23,1222 27,1249|41,1385 47,1385 74,1370 125,1355 131,1334 105,1241|131,1334 142,1331 179,1374 188,1339 230,1292 241,1199 256,1191 228,1126 266,1098|179,1374 183,1382 179,1480|230,1292 260,1347 297,1339 374,1352 383,1303 443,1275|297,1341 289,1412 280,1463 280,1495|179,1480 250,1488 280,1495 334,1516 394,1484 473,1409 497,1411 490,1377 450,1343 475,1307|450,1343 473,1409|481,1410 475,1510 537,1438 536,1345 503,1342 510,1318|334,1516 347,1531 363,1568|534,1277 592,1319 609,1310 655,1270 690,1208 725,1215 796,1297 743,1299 788,1353 769,1363 806,1444 821,1452 906,1402|725,1215 726,1182 816,1184|609,1310 625,1365 649,1423 676,1471 730,1463 735,1467 806,1444|735,1467 755,1535 759,1568'},
{x:760,y:900,sx:1568/720,sy:1568/600,close:'1568,0 602,0 573,30 525,60 443,91 413,79 363,95',
out:'363,95 286,107 275,262 316,294 307,338 359,415 384,426 413,418 476,459 550,429 536,390 588,370 612,447 620,468 603,507 645,538 693,645 655,708 652,851 707,855 749,825 770,843 834,947 713,997 711,1053 741,1071 770,1150 785,1248 823,1330 871,1317 866,1347 918,1436 987,1329 1029,1340 1120,1311 1145,1335 1219,1190 1309,1191 1344,1197 1336,1211 1336,1307 1378,1328 1407,1320 1440,1378 1516,1316 1488,1280 1549,1233 1568,1248',
in:'363,95 381,250 399,310 416,412 413,418|416,412 480,351 466,263 479,165 443,91|625,97 598,227 628,229 623,315 592,324 614,366 588,370|573,30 580,78 625,97 785,156 795,154 874,124 892,146 911,115 906,83 961,93 970,82 969,64 1018,45 1037,51 1066,101 1116,38 1172,120 1172,134 1141,167 1116,154 1087,156 1042,166 1023,124 1018,45|795,154 821,310 781,362 747,335 720,330 670,405 612,447|892,146 938,228 951,264 966,333 975,354 944,349 800,401 781,362|800,401 820,443 834,491 900,498 918,553 954,537 1003,530 966,445 975,436 944,349|966,333 1003,321 1032,322 1087,284 1077,230 1055,211 1050,167|951,264 984,213 1003,205 1042,166|1032,322 1050,443 1043,461 1047,473 1038,524 1003,530|1087,284 1116,281 1138,384 1108,426 1094,424 1050,443|1131,356 1185,340|1310,530 1192,566 1157,514 1174,490 1213,441|1108,426 1145,470 1104,483 1085,514 1160,639|1145,470 1174,490|1047,473 1085,514|834,491 795,550 781,640 764,659 723,665 693,645|918,553 922,606 942,652 984,703 1043,732 1116,726 1133,712 1160,639 1192,566|764,659 785,716 863,715 880,721 883,654 942,652|785,716 749,825|1043,732 1040,804 997,832 969,865 938,900 930,970 790,1046 781,1139 770,1150|781,1139 806,1159 905,1164 903,1188 978,1214 1010,1268 1029,1340|969,865 1020,922 1031,986 1069,970 1108,1002 1197,957 1231,902 1201,824 1157,773 1140,742 1146,732 1133,712|1108,1002 1131,1122 1160,1128 1191,1139 1219,1190|1172,134 1201,165|1231,902 1288,838 1252,775 1258,757 1303,751 1308,712 1296,663 1326,625 1317,610 1312,530|1262,459 1310,530|1231,902 1245,973 1285,948 1286,960 1349,1020 1341,959 1378,970 1428,991 1513,1000 1532,988 1536,960 1508,825 1512,768 1465,761 1456,738 1411,724 1452,648 1450,629 1370,676 1365,674 1308,712|1288,838 1317,850 1329,837 1354,847 1355,887 1407,892 1378,970|1407,892 1418,845 1419,783 1465,761|1349,1020 1315,1057 1299,1096 1315,1095 1309,1191|1513,1000 1483,1046 1498,1119 1538,1144 1549,1233|1538,1144 1568,1137|1310,530 1413,517 1428,500|1450,512 1497,566 1452,635|1497,566 1515,566'},
{x:1450,y:900,sx:1568/740,sy:1568/600,close:'0,1271 0,0 911,0',
out:'911,17 928,72 967,103 933,168 1028,122 1064,259 1119,259 1217,225 1264,244 1328,284 1310,393 1206,384 1207,463 1184,481 1253,482 1257,570 1232,579 1156,590 1125,643 1103,615 1056,621 970,675 977,714 977,759 994,807 1004,906 977,924 982,1007 967,1062 941,1051 886,1117 837,1098 803,1140 745,1149 729,1125 692,1084 642,1017 526,1063 499,1085 516,1109 510,1129 486,1139 469,1151 422,1122 338,1189 327,1253 254,1352 300,1354 297,1419 257,1496 201,1496 178,1437 142,1495 118,1440 102,1420 115,1295 45,1234 0,1271',
in:'334,52 347,68 363,107 387,196 367,204 355,256 354,293 411,320 414,441 377,471 361,450 344,506 348,541 408,580 432,625 414,661 381,711 371,660 344,721 309,708 297,593 316,532 319,516 344,506|318,126 363,107|318,267 355,256|292,345 354,293|387,196 455,214 510,165 530,190 553,198 563,108 643,142 627,182 680,206 716,208 769,183 763,140 756,73 735,0|553,198 585,231 602,321 583,311 555,322 539,365 553,500 475,527 414,441|602,321 673,410 730,412 761,407 869,413 940,394 987,310 894,294 802,288 769,183|987,310 1064,259|940,394 954,466 993,478 1045,449 1072,472 1105,410 1217,337 1264,244|1072,472 1068,551 1103,615|673,410 665,533 675,583 753,631 825,575 820,514 761,407|665,533 612,544 587,550 614,625 521,685 454,636 469,602 475,527|753,631 827,681 838,678 834,695 858,738 977,759|827,681 756,748 726,766 726,846 700,842 686,782 598,787 595,865 571,861 583,914 642,1017|700,842 711,865 725,934 692,1016 726,1048 729,1125|521,685 541,727 568,735 598,787|454,636 495,714 448,700 414,661|448,700 449,855 487,874 525,876 583,914|309,708 333,805 348,842 372,850 401,889 449,855|401,889 388,980 375,1059 300,1055 297,1015 246,1000 229,988 229,965 302,840 333,805|302,840 297,799 235,784 231,750 185,759 171,735 133,786 124,829 202,907 229,965|171,735 189,686 175,635 173,608 142,560 193,552 188,518 232,535|235,528 316,532|188,518 176,498 113,548 95,532 12,566 58,606 33,627 33,665 63,718 90,727 94,775 133,786|63,718 34,795 6,768|124,829 84,900 32,963 73,982 88,1050 132,1091 168,1075 178,1080 205,1143 224,1151 265,1188 277,1161 338,1189|32,963 29,988 0,1000|132,1091 88,1142 71,1135 34,1144 45,1234|34,1144 0,1122|229,988 178,1043 178,1080|375,1059 416,1047 404,1078 422,1122|224,1151 200,1284 220,1328 254,1352|200,1284 152,1283 128,1270 115,1295|475,0 475,47 497,82 549,110 563,108|475,47 515,0|676,7 613,86 613,131'},
{x:1300,y:880,sx:3,sy:3,close:'',out:'',
in:'120,40 140,52 149,68 86,105 79,185 74,187 36,249 65,288 100,330 122,340 119,432 166,449|65,288 86,258 118,253 177,235 228,220 282,211 300,202 330,184 380,147|118,253 128,300 150,305 155,333|0,453 12,450 22,428 119,432|86,434 98,480 50,518 48,570 0,620|98,480 110,478 108,492 96,490 102,505 84,536 124,558 124,572 190,514 168,470 166,449|124,572 122,588 178,660|166,449 187,415 190,382 223,365 226,358 208,338 186,333 155,337 122,340|177,235 172,280 208,303 186,318|200,230 222,285 236,318|228,220 222,258 240,290 243,318|231,222 266,265 265,290 272,305 243,318|282,211 305,250 325,302|300,202 338,242 351,264 314,278|380,147 400,190 425,215 425,255 396,268 380,245 352,230 338,242|352,230 346,212 385,193 403,192|272,305 325,302|243,318 252,352 290,377|245,320 298,313 306,345 293,377|325,302 316,345 330,362 318,378 293,377 260,388 250,403|236,318 270,385 290,377|325,300 355,292 375,270 395,285 458,290|325,312 360,310 395,290|395,268 398,285|396,270 430,260 458,283 450,250 489,242|450,250 456,205 474,185 460,150|380,147 460,147 487,143 498,118 570,155 625,184 692,180|487,143 500,150 507,178 507,235|507,235 489,242 500,280 495,298 460,292 463,335 432,337 408,358 402,350 360,312|507,235 552,228 554,262 499,279|552,228 590,213 630,207 692,184|554,262 560,310 557,327 535,318 510,303 505,335 455,340|507,303 500,285|557,248 605,258 622,262 628,240 630,207|622,262 617,298|622,262 650,260 685,277 692,184|685,277 688,310|560,300 610,295|557,327 600,340|505,335 560,352 585,355 600,342|585,355 583,390|497,378 508,362 505,335|455,340 458,380|408,358 358,395 370,365|360,365 408,405|408,358 430,340|334,408 316,378|334,408 392,428|250,403 289,447 334,400|223,365 250,403 193,455 176,468|392,428 408,403 430,388 458,380 500,382 583,390 680,412 716,430 797,468 863,458 900,432|408,293 416,325 425,337|408,293 395,300 360,340|688,310 722,328 735,370 746,397 716,430|746,397 770,387 832,383 900,367|595,357 610,370 636,377 630,402|722,328 700,345|684,360 690,380 680,412|193,455 235,499 226,535 217,560 197,605 203,660|235,499 280,487 330,480 380,515|226,535 287,523|280,487 278,512 295,530 325,508 330,480|240,535 270,573 345,634 378,650|392,428 380,515 378,556 345,634 330,655 250,660|378,650 396,590 458,533 468,547 525,581 550,580 598,565 660,588 698,630 660,660|525,581 487,655 500,680|758,455 741,520 734,517 724,573 796,588 783,660|314,25 314,82 348,140 380,147 380,20 314,25|355,0 360,22|706,0 704,78 692,110 694,183|704,78 806,88 848,98 900,115|858,0 846,62 848,98|694,183 742,208 742,233 865,217 900,203|566,152 576,152 574,160 568,160 566,152|380,346 390,348 386,354 380,346'}];
const tf=t=>`transform="translate(${t.x} ${t.y}) scale(${1/t.sx} ${1/t.sy})"`;
let d='';
for(const t of T)if(t.out)d+=`<path class="blk" ${tf(t)} d="M${t.out} L${t.close}Z"/>`;
// The river shows faintly through the districts
d+=`<path class="th" ${tf(T[2])} d="M800,560 834,480 900,485 925,560 935,650 990,710 1043,740 1120,738 1142,705 1165,640 1195,575 1310,540 1400,535 1445,500 1455,430 1462,330 1480,300 1508,288"/>
<path class="th" ${tf(T[3])} d="M-60,288 0,288 95,297 165,314 210,345 245,360 300,350 354,300 412,330 415,440 440,505 475,530 558,505 570,460 550,380 560,330 585,318 630,380 680,425 760,420 870,427 945,400 980,335 1050,272"/>
<path class="th" style="stroke-width:6" ${tf(T[3])} d="M650,310 760,335M765,310 960,325M775,345 910,345M345,440 390,425M430,350 500,360"/>`;
for(const t of T){const paths=(t.out?[t.out]:[]).concat(t.in.split('|'));
 d+=`<path class="ln" ${tf(t)} d="${paths.map(q=>'M'+q).join('')}"/>`}
d+='<path transform="translate(1300 880) scale(.33333)" fill="#e8e8e8" stroke="#555a5e" stroke-width="3" d="M610,297 625,307 640,303 652,312 667,310 664,328 677,345 695,345 695,360 665,362 658,375 640,375 636,362 600,338 608,328ZM186,325 200,317 238,320 205,336ZM130,338 145,328 158,335Z"/>';
document.getElementById('districts').innerHTML=d;
</script>
<script src="https://cdn.jsdelivr.net/npm/bootstrap@5.3.0/dist/js/bootstrap.bundle.min.js"></script>
</body>
</html>
